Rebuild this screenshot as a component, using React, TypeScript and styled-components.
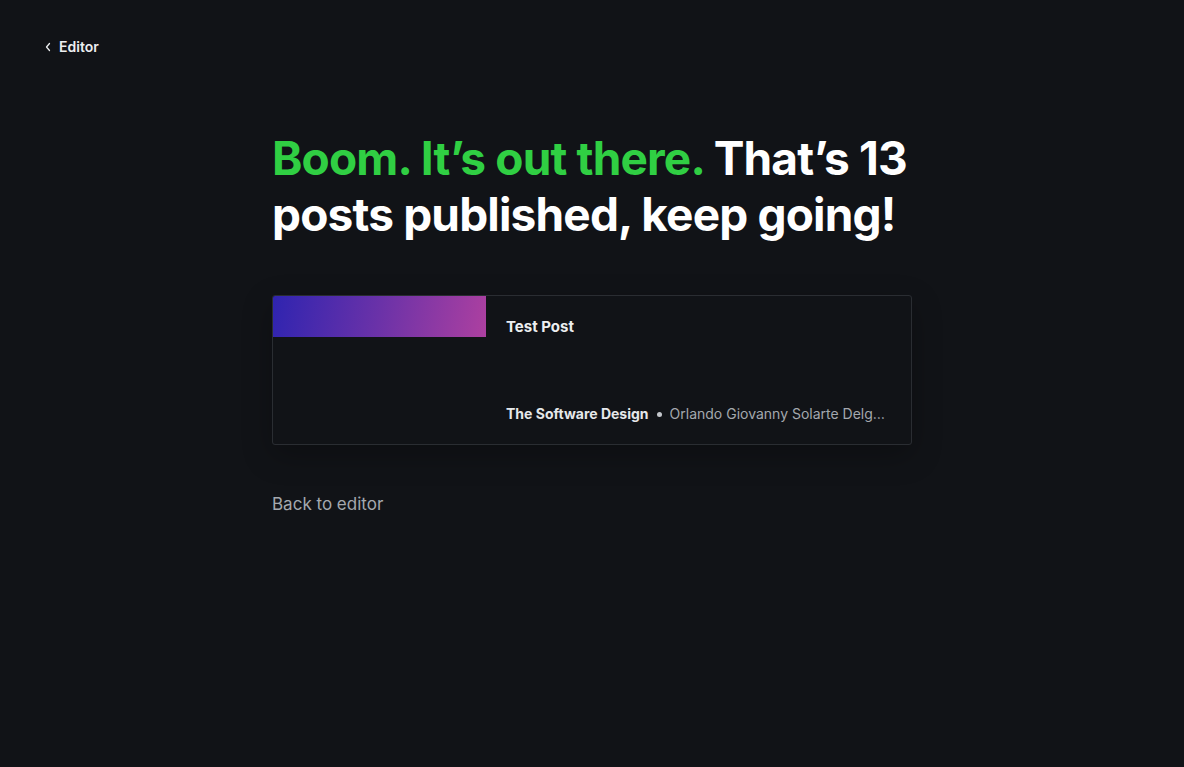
import React from "react";
import styled, { createGlobalStyle } from "styled-components";

const Global = createGlobalStyle`
  html, body { margin: 0; padding: 0; background: #111317; }
  body { font-family: Inter, "Noto Sans", sans-serif; -webkit-font-smoothing: antialiased; }
  * { box-sizing: border-box; }
`;

const Page = styled.div`
  min-height: 767px;
  background: #111317;
  color: #fff;
  display: flex;
  flex-direction: column;
`;

const TopBar = styled.header`
  height: 94px;
  padding: 0 44px;
  display: flex;
  align-items: flex-start;
  padding-top: 38px;
`;

const BackLink = styled.a`
  display: inline-flex;
  align-items: center;
  gap: 7px;
  color: #eceef0;
  font-size: 14px;
  font-weight: 600;
  text-decoration: none;
  line-height: 18px;
`;

const Main = styled.main`
  width: 640px;
  margin: 0 auto;
  display: flex;
  flex-direction: column;
`;

const Title = styled.h1`
  margin: 36px 0 0;
  font-size: 46px;
  line-height: 56px;
  font-weight: 700;
  letter-spacing: -0.018em;
  color: #fff;
`;

const Green = styled.span`
  color: #30cf43;
`;

const Card = styled.div`
  margin-top: 53px;
  height: 150px;
  border: 1px solid #2a2d32;
  border-radius: 3px;
  display: grid;
  grid-template-columns: 213px 1fr;
  overflow: hidden;
  box-shadow: 0 10px 30px rgba(0, 0, 0, 0.25);
`;

const Thumb = styled.div`
  height: 41px;
  background: linear-gradient(100deg, #2f24b0 0%, #6b32a8 50%, #ad40a0 100%);
`;

const Body = styled.div`
  padding: 21px 25px 21px 20px;
  display: flex;
  flex-direction: column;
  justify-content: space-between;
  min-width: 0;
`;

const PostTitle = styled.div`
  font-size: 15px;
  font-weight: 700;
  color: #eceef0;
  line-height: 20px;
`;

const Meta = styled.div`
  display: flex;
  align-items: center;
  font-size: 14px;
  line-height: 18px;
  white-space: nowrap;
  min-width: 0;
`;

const Publication = styled.span`
  font-weight: 700;
  color: #e6e8ea;
  flex-shrink: 0;
`;

const Dot = styled.span`
  width: 5px;
  height: 5px;
  border-radius: 50%;
  background: #c4c7cc;
  margin: 1px 8px 0;
  flex-shrink: 0;
`;

const Author = styled.span`
  color: #a4a8ae;
  overflow: hidden;
  text-overflow: ellipsis;
  min-width: 0;
`;

const BackButton = styled.a`
  margin-top: 48px;
  font-size: 17px;
  color: #a4a8ae;
  text-decoration: none;
  line-height: 22px;
`;

export default function App() {
  return (
    <>
      <Global />
      <Page>
        <TopBar>
          <BackLink href="#">
            <svg width="8" height="10" viewBox="0 0 8 10" fill="none">
              <path d="M5.5 1.5 2.5 5l3 3.5" stroke="#eceef0" strokeWidth="1.3" strokeLinecap="round" strokeLinejoin="round" />
            </svg>
            Editor
          </BackLink>
        </TopBar>
        <Main>
          <Title>
            <Green>Boom. It’s out there.</Green> That’s 13 posts published, keep going!
          </Title>
          <Card>
            <div>
              <Thumb />
            </div>
            <Body>
              <PostTitle>Test Post</PostTitle>
              <Meta>
                <Publication>The Software Design</Publication>
                <Dot />
                <Author>Orlando Giovanny Solarte Delgado</Author>
              </Meta>
            </Body>
          </Card>
          <BackButton href="#">Back to editor</BackButton>
        </Main>
      </Page>
    </>
  );
}
